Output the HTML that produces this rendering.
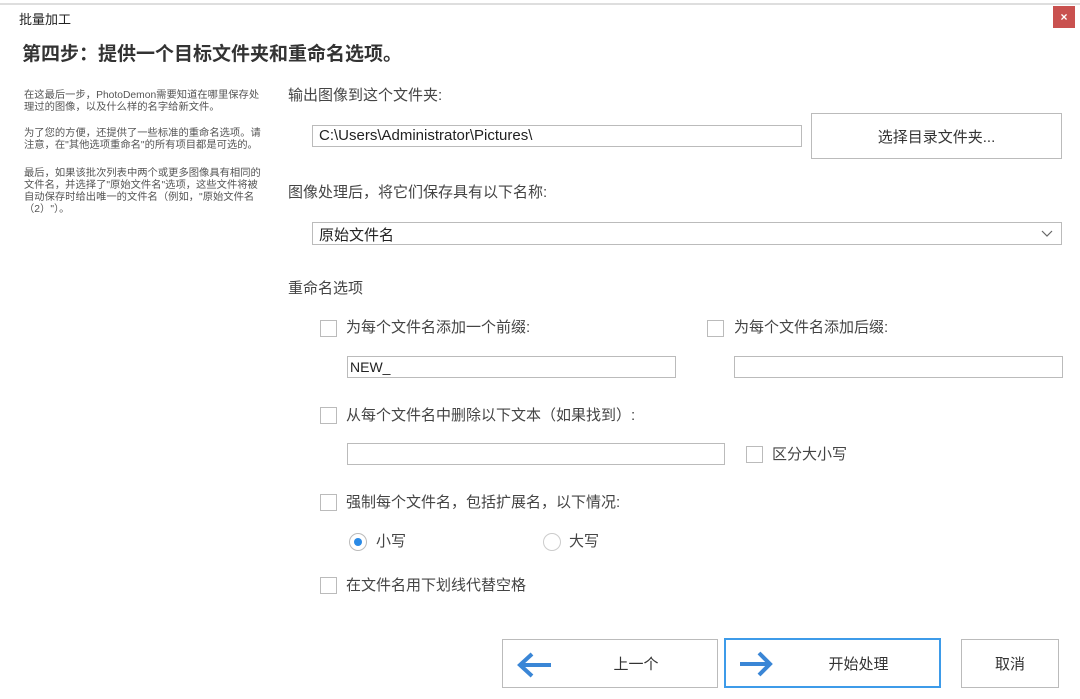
<!DOCTYPE html>
<html><head><meta charset="utf-8"><style>
*{margin:0;padding:0;box-sizing:border-box}
body{width:1080px;height:699px;background:#fff;position:relative;overflow:hidden;font-family:"Liberation Sans","Noto Sans CJK SC",sans-serif;color:#333}
.a{position:absolute;white-space:nowrap}
.p{position:absolute;left:24px;font-size:10.3px;line-height:12px;color:#555;white-space:nowrap}
.box{position:absolute;border:1px solid #bbb;background:#fff}
.cb{position:absolute;width:17px;height:17px;border:1px solid #bbb;background:#fff}
.l{position:absolute;font-size:15px;color:#444;white-space:nowrap;line-height:18px}
.btn{position:absolute;border:1px solid #bbb;background:#fff;font-size:15px;color:#333;display:flex;align-items:center;justify-content:center}
</style></head><body>
<div style="position:absolute;left:0;top:3px;width:1080px;height:2px;background:#dedede"></div>
<div class="a" style="left:19px;top:9px;font-size:13px;color:#222">批量加工</div>
<div style="position:absolute;left:1053px;top:6px;width:22px;height:22px;background:#c9514f;color:#fff;font-size:12px;display:flex;align-items:center;justify-content:center;font-weight:bold">×</div>
<div class="a" style="left:22px;top:39px;font-size:19px;font-weight:bold;color:#333">第四步：提供一个目标文件夹和重命名选项。</div>
<div class="p" style="top:90px">在这最后一步，PhotoDemon需要知道在哪里保存处<br>理过的图像，以及什么样的名字给新文件。</div>
<div class="p" style="top:128px">为了您的方便，还提供了一些标准的重命名选项。请<br>注意，在"其他选项重命名"的所有项目都是可选的。</div>
<div class="p" style="top:168px">最后，如果该批次列表中两个或更多图像具有相同的<br>文件名，并选择了"原始文件名"选项，这些文件将被<br>自动保存时给出唯一的文件名（例如，"原始文件名<br>（2）"）。</div>
<div class="l" style="left:288px;top:87px">输出图像到这个文件夹:</div>
<div class="box" style="left:312px;top:125px;width:490px;height:22px;font-size:15px;padding:1px 6px;color:#222">C:\Users\Administrator\Pictures\</div>
<div class="btn" style="left:811px;top:113px;width:251px;height:46px">选择目录文件夹...</div>
<div class="l" style="left:288px;top:184px">图像处理后，将它们保存具有以下名称:</div>
<div class="box" style="left:312px;top:222px;width:750px;height:23px;font-size:15px;padding:1px 6px;color:#222">原始文件名<svg style="position:absolute;right:8px;top:7px" width="12" height="7"><path d="M1 1l5 5 5-5" fill="none" stroke="#666" stroke-width="1.2"/></svg></div>
<div class="l" style="left:288px;top:280px">重命名选项</div>
<div class="cb" style="left:320px;top:320px"></div><div class="l" style="left:346px;top:319px">为每个文件名添加一个前缀:</div>
<div class="cb" style="left:707px;top:320px"></div><div class="l" style="left:734px;top:319px">为每个文件名添加后缀:</div>
<div class="box" style="left:347px;top:356px;width:329px;height:22px;font-size:14px;padding:2px 2px;color:#222">NEW_</div>
<div class="box" style="left:734px;top:356px;width:329px;height:22px"></div>
<div class="cb" style="left:320px;top:407px"></div><div class="l" style="left:346px;top:407px">从每个文件名中删除以下文本（如果找到）:</div>
<div class="box" style="left:347px;top:443px;width:378px;height:22px"></div>
<div class="cb" style="left:746px;top:446px"></div><div class="l" style="left:772px;top:446px">区分大小写</div>
<div class="cb" style="left:320px;top:494px"></div><div class="l" style="left:346px;top:494px">强制每个文件名，包括扩展名，以下情况:</div>
<div style="position:absolute;left:349px;top:533px;width:18px;height:18px;border:1px solid #bbb;border-radius:50%;background:#fff"><div style="position:absolute;left:4px;top:4px;width:8px;height:8px;border-radius:50%;background:#2a8ae6"></div></div>
<div class="l" style="left:376px;top:533px">小写</div>
<div style="position:absolute;left:543px;top:533px;width:18px;height:18px;border:1px solid #ccc;border-radius:50%"></div>
<div class="l" style="left:569px;top:533px">大写</div>
<div class="cb" style="left:320px;top:577px"></div><div class="l" style="left:346px;top:577px">在文件名用下划线代替空格</div>
<div class="btn" style="left:502px;top:639px;width:216px;height:49px"><svg style="position:absolute;left:12px;top:11px" width="40" height="28"><path d="M36 14H6M17 3L5 14l12 11" fill="none" stroke="#3a86d6" stroke-width="4"/></svg><span style="margin-left:52px">上一个</span></div>
<div class="btn" style="left:724px;top:638px;width:217px;height:50px;border:2px solid #3d9be9"><svg style="position:absolute;left:12px;top:10px" width="40" height="28"><path d="M2 14h30M21 3l11 11-11 11" fill="none" stroke="#3a86d6" stroke-width="4"/></svg><span style="margin-left:52px">开始处理</span></div>
<div class="btn" style="left:961px;top:639px;width:98px;height:49px">取消</div>
</body></html>
